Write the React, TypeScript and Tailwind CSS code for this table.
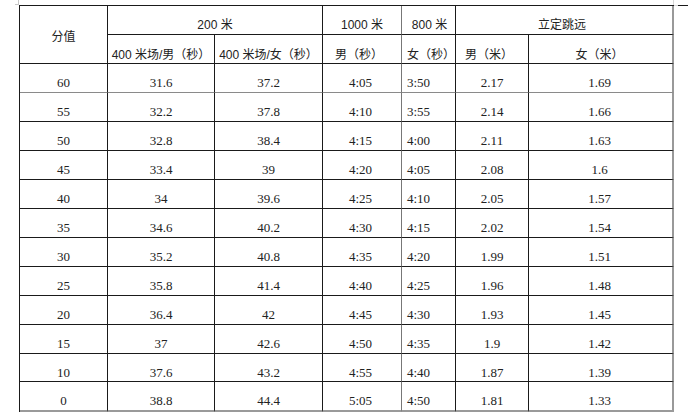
import React from "react";

const rows: string[][] = [
  ["60", "31.6", "37.2", "4:05", "3:50", "2.17", "1.69"],
  ["55", "32.2", "37.8", "4:10", "3:55", "2.14", "1.66"],
  ["50", "32.8", "38.4", "4:15", "4:00", "2.11", "1.63"],
  ["45", "33.4", "39", "4:20", "4:05", "2.08", "1.6"],
  ["40", "34", "39.6", "4:25", "4:10", "2.05", "1.57"],
  ["35", "34.6", "40.2", "4:30", "4:15", "2.02", "1.54"],
  ["30", "35.2", "40.8", "4:35", "4:20", "1.99", "1.51"],
  ["25", "35.8", "41.4", "4:40", "4:25", "1.96", "1.48"],
  ["20", "36.4", "42", "4:45", "4:30", "1.93", "1.45"],
  ["15", "37", "42.6", "4:50", "4:35", "1.9", "1.42"],
  ["10", "37.6", "43.2", "4:55", "4:40", "1.87", "1.39"],
  ["0", "38.8", "44.4", "5:05", "4:50", "1.81", "1.33"],
];

const sans = "font-['Liberation_Sans','Noto_Sans_CJK_SC',sans-serif]";
const serif = "font-['Liberation_Serif','Noto_Serif_CJK_SC',serif]";

export default function App() {
  return (
    <div className="relative w-[688px] h-[417px] bg-white overflow-hidden">
      {/* corner marks */}
      <div className="absolute left-[15px] top-[4px] w-[4px] h-px bg-[#c8c8c8]" />
      <div className="absolute left-[18px] top-0 w-px h-[5px] bg-[#c8c8c8]" />
      <div className="absolute left-[674px] top-[5px] w-[4px] h-px bg-[#d8d8d8]" />
      <div className="absolute left-[673px] top-0 w-px h-[5px] bg-[#d8d8d8]" />

      <div className="pt-[5px] pl-[19px]">
        <div
          className={`grid grid-cols-[88px_107px_108px_79px_54px_73px_145px] border-l border-t border-[#1a1a1a] text-[#222] ${sans} text-[12px] leading-[16px]`}
        >
          {/* header */}
          <div className="row-span-2 h-[58px] border-r border-b border-[#1a1a1a] flex justify-center items-start pt-[23px]">
            分值
          </div>
          <div className="col-span-2 h-[29px] border-r border-b border-[#1a1a1a] flex justify-center items-start pt-[11px]">
            200 米
          </div>
          <div className="h-[29px] border-r border-b border-[#1a1a1a] border-r-[#777] flex justify-center items-start pt-[11px]">
            1000 米
          </div>
          <div className="h-[29px] border-r border-b border-[#1a1a1a] flex justify-center items-start pt-[11px] pl-[2px]">
            800 米
          </div>
          <div className="col-span-2 h-[29px] border-r-2 border-r-[#999] border-b border-b-[#1a1a1a] flex justify-center items-start pt-[11px] pr-[4px]">
            立定跳远
          </div>
          <div className="h-[29px] border-r border-b border-[#1a1a1a] flex justify-center items-start pt-[12px]">
            400 米场/男（秒）
          </div>
          <div className="h-[29px] border-r border-b border-[#1a1a1a] flex justify-center items-start pt-[12px]">
            400 米场/女（秒）
          </div>
          <div className="h-[29px] border-r border-b border-[#1a1a1a] border-r-[#777] flex justify-center items-start pt-[12px] pr-[6px]">
            男（秒）
          </div>
          <div className="h-[29px] border-r border-b border-[#1a1a1a] flex justify-start items-start pt-[12px] pl-[5px]">
            女（秒）
          </div>
          <div className="h-[29px] border-r border-b border-[#1a1a1a] flex justify-center items-start pt-[12px] pr-[6px]">
            男（米）
          </div>
          <div className="h-[29px] border-r-2 border-r-[#999] border-b border-b-[#1a1a1a] flex justify-center items-start pt-[12px] pr-[2px]">
            女（米）
          </div>

          {/* body */}
          {rows.map((r, i) => {
            const last = i === rows.length - 1;
            const bottom = last
              ? "border-b-2 border-b-[#9a9a9a]"
              : i === 0
              ? "border-b border-b-[#8a8a8a]"
              : "border-b border-b-[#1a1a1a]";
            const h = i === 10 ? "h-[28px]" : last ? "h-[30px]" : "h-[29px]";
            return (
              <React.Fragment key={i}>
                {r.map((c, j) => {
                  const right =
                    j === 6
                      ? "border-r-2 border-r-[#999]"
                      : j === 3
                      ? "border-r border-r-[#777]"
                      : "border-r border-r-[#1a1a1a]";
                  const align =
                    j === 4
                      ? "justify-start pl-[5px]"
                      : j === 3
                      ? "justify-center pr-[3px]"
                      : j === 6
                      ? "justify-center pr-[2px]"
                      : "justify-center";
                  return (
                    <div
                      key={j}
                      className={`${h} ${right} ${bottom} ${serif} text-[13px] leading-[15px] flex items-start pt-[11px] ${align}`}
                    >
                      {c}
                    </div>
                  );
                })}
              </React.Fragment>
            );
          })}
        </div>
      </div>
    </div>
  );
}
